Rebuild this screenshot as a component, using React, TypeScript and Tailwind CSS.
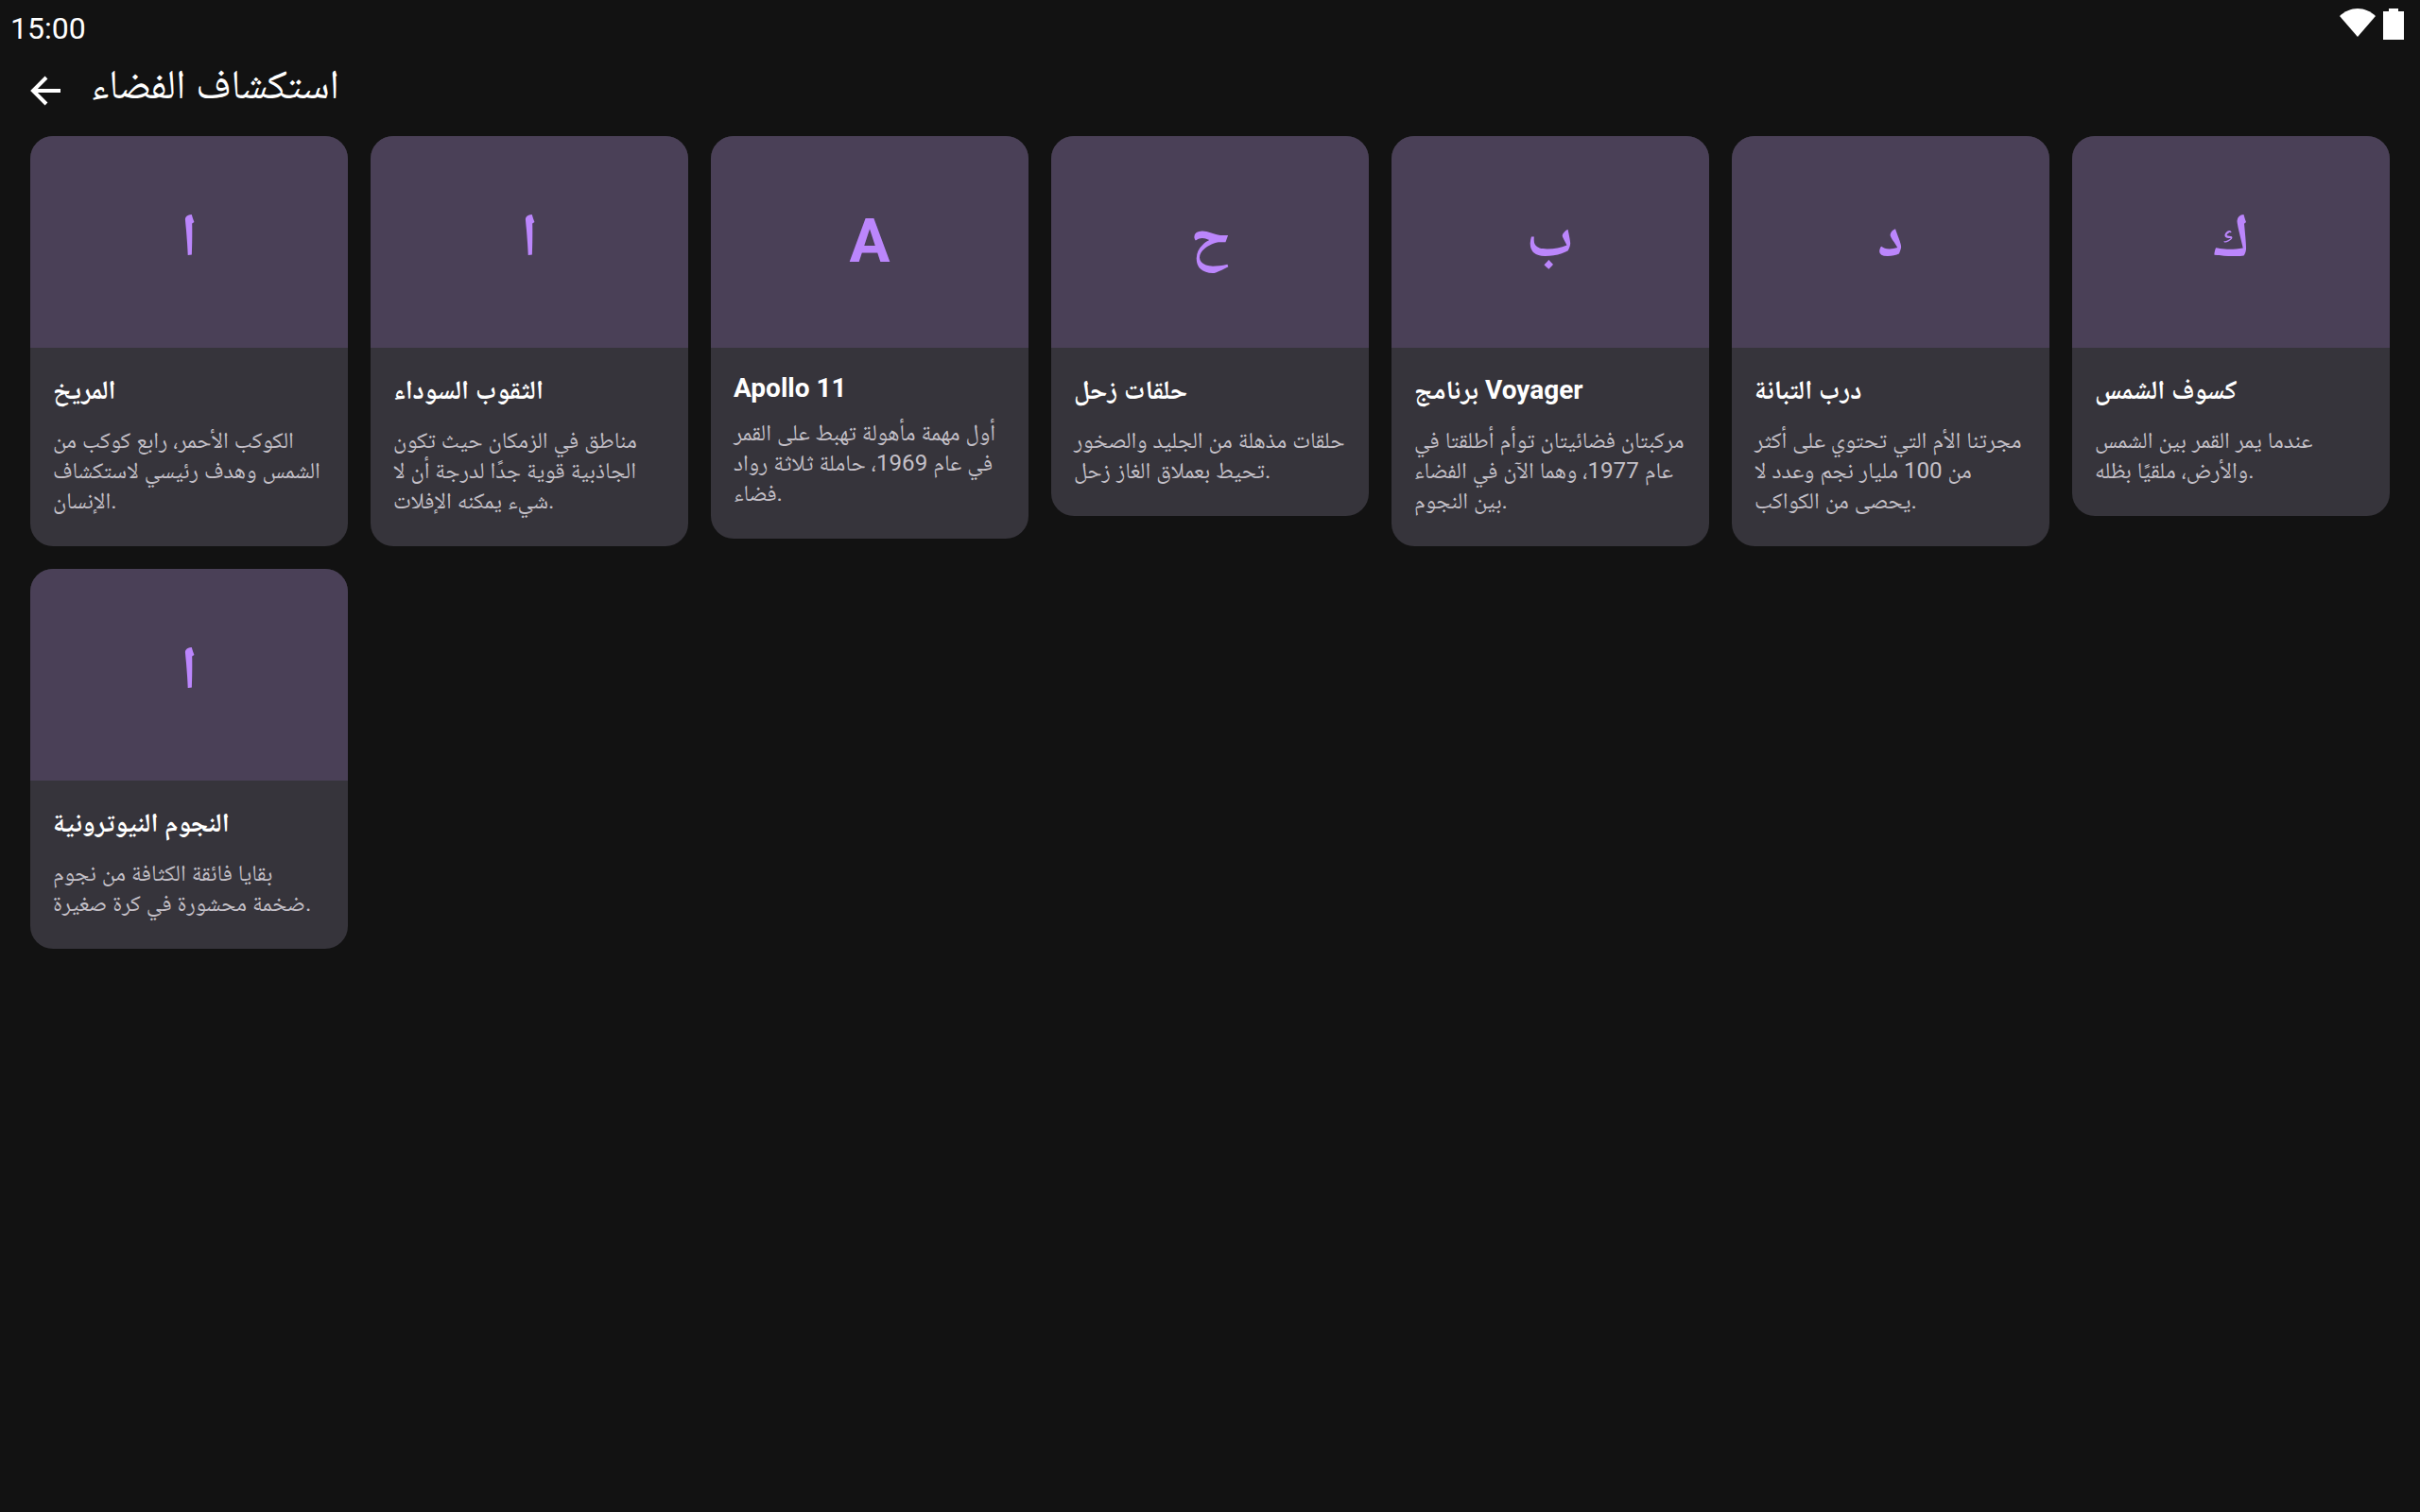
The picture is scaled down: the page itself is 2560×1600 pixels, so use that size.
import React from 'react';

interface Topic {
  letter: string;
  title: string;
  body: string;
  latin?: boolean;
}

const topics: Topic[] = [
  { letter: 'ا', title: 'المريخ', body: 'الكوكب الأحمر، رابع كوكب من الشمس وهدف رئيسي لاستكشاف الإنسان.' },
  { letter: 'ا', title: 'الثقوب السوداء', body: 'مناطق في الزمكان حيث تكون الجاذبية قوية جدًا لدرجة أن لا شيء يمكنه الإفلات.' },
  { letter: 'A', title: 'Apollo 11', body: 'أول مهمة مأهولة تهبط على القمر في عام 1969، حاملة ثلاثة رواد فضاء.', latin: true },
  { letter: 'ح', title: 'حلقات زحل', body: 'حلقات مذهلة من الجليد والصخور تحيط بعملاق الغاز زحل.' },
  { letter: 'ب', title: 'برنامج Voyager', body: 'مركبتان فضائيتان توأم أطلقتا في عام 1977، وهما الآن في الفضاء بين النجوم.' },
  { letter: 'د', title: 'درب التبانة', body: 'مجرتنا الأم التي تحتوي على أكثر من 100 مليار نجم وعدد لا يحصى من الكواكب.' },
  { letter: 'ك', title: 'كسوف الشمس', body: 'عندما يمر القمر بين الشمس والأرض، ملقيًا بظله.' },
  { letter: 'ا', title: 'النجوم النيوترونية', body: 'بقايا فائقة الكثافة من نجوم ضخمة محشورة في كرة صغيرة.' },
];

const TopicCard = ({ topic }: { topic: Topic }) => (
  <div className="w-[336px] self-start overflow-hidden rounded-[24px] bg-[#36343b]">
    <div className={`flex h-[224px] items-center justify-center bg-[#4a4057] text-[64px] leading-[80px] font-bold text-[#bb86fc] ${topic.latin ? '' : 'pb-3'}`}>
      {topic.letter}
    </div>
    <div className="px-6 pt-6 pb-[32px]">
      <h3 className={`text-[28px] font-bold text-white ${topic.latin ? 'leading-[38px]' : 'leading-[42px]'}`}>{topic.title}</h3>
      <p className={`text-[24.15px] leading-[32px] text-[#c4c0c8] ${topic.latin ? 'mt-3' : 'mt-4'}`}>{topic.body}</p>
    </div>
  </div>
);

export default function App() {
  return (
    <div dir="ltr" className="min-h-[1600px] bg-[#121212] font-['Roboto','Noto_Naskh_Arabic',sans-serif] text-white">
      <div className="flex h-[48px] items-start justify-between pl-[11px] pr-[17px]">
        <span className="mt-[11px] text-[32px] leading-[38px]">15:00</span>
        <div className="mt-[9px] flex items-start gap-2">
          <svg width="38" height="30" viewBox="0 0 38 30" fill="white">
            <path d="M0 8 C5 3 12 0 19 0 C26 0 33 3 38 8 L19 30 Z" />
          </svg>
          <svg width="22" height="33" viewBox="0 0 22 33" fill="white">
            <path d="M6 0 H16 V3 H22 V33 H0 V3 H6 Z" />
          </svg>
        </div>
      </div>
      <div className="flex h-[96px] items-center pl-8">
        <svg width="32" height="32" viewBox="0 0 32 32" fill="none" stroke="white" strokeWidth="4">
          <path d="M32 16 H3 M17 2 L3 16 L17 30" />
        </svg>
        <h1 className="ml-8 mb-3 text-[43.6px] leading-[48px]">استكشاف الفضاء</h1>
      </div>
      <div className="flex flex-wrap gap-6 px-8">
        {topics.map((t) => (
          <TopicCard key={t.title} topic={t} />
        ))}
      </div>
    </div>
  );
}
